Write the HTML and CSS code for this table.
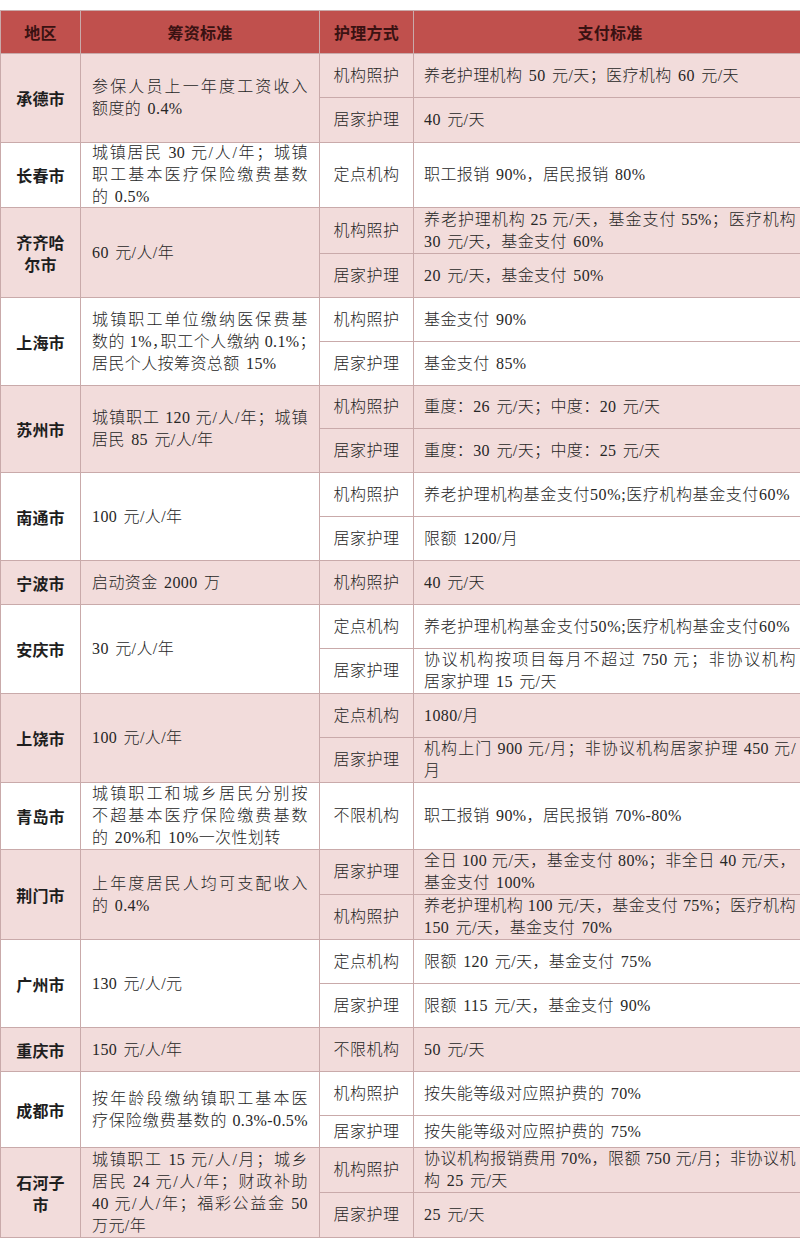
FILE: index.html
```html
<!DOCTYPE html>
<html lang="zh-CN">
<head>
<meta charset="utf-8">
<title>长期护理保险筹资与支付标准</title>
<link rel="stylesheet" href="styles.css">
</head>
<body>
<div class="sheet">
  <div class="cell hd c1">地区</div>
  <div class="cell hd c2">筹资标准</div>
  <div class="cell hd c3">护理方式</div>
  <div class="cell hd c4">支付标准</div>

  <!-- 承德市 -->
  <div class="cell reg p c1 s2">承德市</div>
  <div class="cell fund p c2 s2"><span class="j">参保人员上一年度工资收入</span><span>额度的 0.4%</span></div>
  <div class="cell care p c3">机构照护</div>
  <div class="cell pay p c4"><span>养老护理机构 50 元/天；医疗机构 60 元/天</span></div>
  <div class="cell care p c3">居家护理</div>
  <div class="cell pay p c4"><span>40 元/天</span></div>

  <!-- 长春市 -->
  <div class="cell reg w c1">长春市</div>
  <div class="cell fund w c2"><span class="j">城镇居民 30 元/人/年；城镇</span><span class="j">职工基本医疗保险缴费基数</span><span>的 0.5%</span></div>
  <div class="cell care w c3">定点机构</div>
  <div class="cell pay w c4"><span>职工报销 90%，居民报销 80%</span></div>

  <!-- 齐齐哈尔市 -->
  <div class="cell reg p c1 s2">齐齐哈<br>尔市</div>
  <div class="cell fund p c2 s2"><span>60 元/人/年</span></div>
  <div class="cell care p c3">机构照护</div>
  <div class="cell pay p c4"><span class="j">养老护理机构 25 元/天，基金支付 55%；医疗机构</span><span>30 元/天，基金支付 60%</span></div>
  <div class="cell care p c3">居家护理</div>
  <div class="cell pay p c4"><span>20 元/天，基金支付 50%</span></div>

  <!-- 上海市 -->
  <div class="cell reg w c1 s2">上海市</div>
  <div class="cell fund w c2 s2"><span class="j">城镇职工单位缴纳医保费基</span><span class="j h">数的 1%，职工个人缴纳 0.1%；</span><span>居民个人按筹资总额 15%</span></div>
  <div class="cell care w c3">机构照护</div>
  <div class="cell pay w c4"><span>基金支付 90%</span></div>
  <div class="cell care w c3">居家护理</div>
  <div class="cell pay w c4"><span>基金支付 85%</span></div>

  <!-- 苏州市 -->
  <div class="cell reg p c1 s2">苏州市</div>
  <div class="cell fund p c2 s2"><span class="j">城镇职工 120 元/人/年；城镇</span><span>居民 85 元/人/年</span></div>
  <div class="cell care p c3">机构照护</div>
  <div class="cell pay p c4"><span>重度：26 元/天；中度：20 元/天</span></div>
  <div class="cell care p c3">居家护理</div>
  <div class="cell pay p c4"><span>重度：30 元/天；中度：25 元/天</span></div>

  <!-- 南通市 -->
  <div class="cell reg w c1 s2">南通市</div>
  <div class="cell fund w c2 s2"><span>100 元/人/年</span></div>
  <div class="cell care w c3">机构照护</div>
  <div class="cell pay w c4"><span class="tight">养老护理机构基金支付50%;医疗机构基金支付60%</span></div>
  <div class="cell care w c3">居家护理</div>
  <div class="cell pay w c4"><span>限额 1200/月</span></div>

  <!-- 宁波市 -->
  <div class="cell reg p c1">宁波市</div>
  <div class="cell fund p c2"><span>启动资金 2000 万</span></div>
  <div class="cell care p c3">机构照护</div>
  <div class="cell pay p c4"><span>40 元/天</span></div>

  <!-- 安庆市 -->
  <div class="cell reg w c1 s2">安庆市</div>
  <div class="cell fund w c2 s2"><span>30 元/人/年</span></div>
  <div class="cell care w c3">定点机构</div>
  <div class="cell pay w c4"><span class="tight">养老护理机构基金支付50%;医疗机构基金支付60%</span></div>
  <div class="cell care w c3">居家护理</div>
  <div class="cell pay w c4"><span class="j">协议机构按项目每月不超过 750 元；非协议机构</span><span>居家护理 15 元/天</span></div>

  <!-- 上饶市 -->
  <div class="cell reg p c1 s2">上饶市</div>
  <div class="cell fund p c2 s2"><span>100 元/人/年</span></div>
  <div class="cell care p c3">定点机构</div>
  <div class="cell pay p c4"><span>1080/月</span></div>
  <div class="cell care p c3">居家护理</div>
  <div class="cell pay p c4"><span class="j">机构上门 900 元/月；非协议机构居家护理 450 元/</span><span>月</span></div>

  <!-- 青岛市 -->
  <div class="cell reg w c1">青岛市</div>
  <div class="cell fund w c2"><span class="j">城镇职工和城乡居民分别按</span><span class="j">不超基本医疗保险缴费基数</span><span>的 20%和 10%一次性划转</span></div>
  <div class="cell care w c3">不限机构</div>
  <div class="cell pay w c4"><span>职工报销 90%，居民报销 70%-80%</span></div>

  <!-- 荆门市 -->
  <div class="cell reg p c1 s2">荆门市</div>
  <div class="cell fund p c2 s2"><span class="j">上年度居民人均可支配收入</span><span>的 0.4%</span></div>
  <div class="cell care p c3">居家护理</div>
  <div class="cell pay p c4"><span class="j">全日 100 元/天，基金支付 80%；非全日 40 元/天，</span><span>基金支付 100%</span></div>
  <div class="cell care p c3">机构照护</div>
  <div class="cell pay p c4"><span class="j">养老护理机构 100 元/天，基金支付 75%；医疗机构</span><span>150 元/天，基金支付 70%</span></div>

  <!-- 广州市 -->
  <div class="cell reg w c1 s2">广州市</div>
  <div class="cell fund w c2 s2"><span>130 元/人/元</span></div>
  <div class="cell care w c3">定点机构</div>
  <div class="cell pay w c4"><span>限额 120 元/天，基金支付 75%</span></div>
  <div class="cell care w c3">居家护理</div>
  <div class="cell pay w c4"><span>限额 115 元/天，基金支付 90%</span></div>

  <!-- 重庆市 -->
  <div class="cell reg p c1">重庆市</div>
  <div class="cell fund p c2"><span>150 元/人/年</span></div>
  <div class="cell care p c3">不限机构</div>
  <div class="cell pay p c4"><span>50 元/天</span></div>

  <!-- 成都市 -->
  <div class="cell reg w c1 s2">成都市</div>
  <div class="cell fund w c2 s2"><span class="j">按年龄段缴纳镇职工基本医</span><span class="j">疗保险缴费基数的 0.3%-0.5%</span></div>
  <div class="cell care w c3">机构照护</div>
  <div class="cell pay w c4"><span>按失能等级对应照护费的 70%</span></div>
  <div class="cell care w c3">居家护理</div>
  <div class="cell pay w c4"><span>按失能等级对应照护费的 75%</span></div>

  <!-- 石河子市 -->
  <div class="cell reg p c1 s2">石河子<br>市</div>
  <div class="cell fund p c2 s2"><span class="j">城镇职工 15 元/人/月；城乡</span><span class="j">居民 24 元/人/年；财政补助</span><span class="j">40 元/人/年；福彩公益金 50</span><span>万元/年</span></div>
  <div class="cell care p c3">机构照护</div>
  <div class="cell pay p c4"><span class="j">协议机构报销费用 70%，限额 750 元/月；非协议机</span><span>构 25 元/天</span></div>
  <div class="cell care p c3">居家护理</div>
  <div class="cell pay p c4"><span>25 元/天</span></div>
</div>
</body>
</html>
```
FILE: styles.css
```css
html, body {
  margin: 0;
  padding: 0;
  background: #ffffff;
  overflow: hidden;
}

body {
  font-family: "Liberation Serif", "Noto Sans CJK SC", serif;
  font-size: 16px;
  font-weight: 300;
  line-height: 22px;
  color: #262626;
  letter-spacing: 0.4px;
  word-spacing: 2px;
}

.sheet {
  margin-top: 10px;
  width: 805px;
  display: grid;
  grid-template-columns: 79px 238px 93px 392px;
  grid-template-rows:
    42px 43px 44px 64px 45px 43px 43px 43px 42px 43px
    43px 43px 43px 43px 44px 43px 44px 66px 44px 44px
    43px 43px 43px 43px 31px 44px 44px;
  gap: 1px;
  padding: 1px;
  background: #c9aaaa;
}

.c1 { grid-column: 1; }
.c2 { grid-column: 2; }
.c3 { grid-column: 3; }
.c4 { grid-column: 4; }
.s2 { grid-row: span 2; }

.cell {
  display: flex;
  flex-direction: column;
  justify-content: center;
  min-width: 0;
}

.p { background: #f2dcdb; }
.w { background: #ffffff; }

.hd {
  background: #c0504d;
  color: #3a1212;
  font-family: "Noto Sans CJK SC", sans-serif;
  font-weight: 700;
  align-items: center;
  letter-spacing: 0.2px;
}

.reg {
  align-items: center;
  text-align: center;
  font-family: "Noto Sans CJK SC", sans-serif;
  font-weight: 700;
  color: #1e1e1e;
  letter-spacing: 0.2px;
}

.care {
  align-items: center;
  text-align: center;
  letter-spacing: 0.5px;
}

.fund {
  padding: 0 11px;
}

.pay {
  padding: 0 10px;
}

.fund span,
.pay span {
  display: block;
  white-space: nowrap;
}

.j {
  text-align: justify;
  text-align-last: justify;
  word-spacing: 0;
}

.h {
  font-feature-settings: "halt";
}

.tight {
  letter-spacing: 0.6px;
  word-spacing: 0;
}
```
